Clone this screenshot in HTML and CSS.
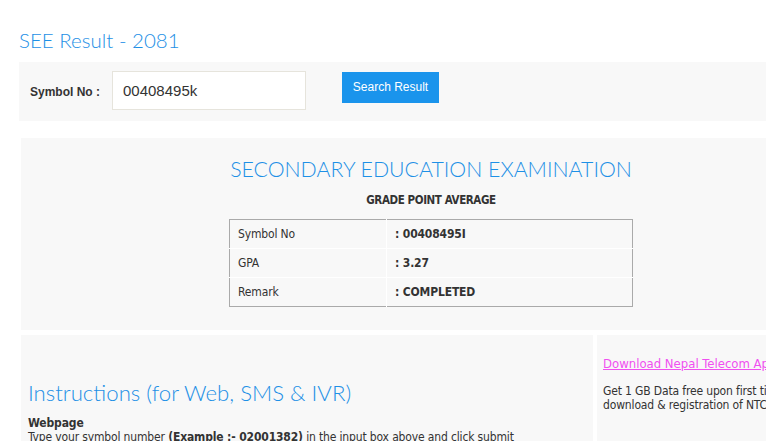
FILE: index.html
```html
<!doctype html>
<html lang="en">
    <head>
        <title>SEE Result - 2081</title>
        <link rel="stylesheet" href="styles.css">
    </head>
    <body>
        <div id="pagina">
            <h1 id="titolo">SEE Result - 2081</h1>
            <div id="ricerca">
                <label for="simbolo" class="etichetta">Symbol No :</label>
                <input type="text" id="simbolo" value="00408495k">
                <input type="button" id="bottone" value="Search Result">
            </div>
            <div id="risultato">
                <h2 class="intestazione">SECONDARY EDUCATION EXAMINATION</h2>
                <div class="sottotitolo">GRADE POINT AVERAGE</div>
                <table class="tabella">
                    <tr><td>Symbol No</td><td class="valore">: 00408495I</td></tr>
                    <tr><td>GPA</td><td class="valore">: 3.27</td></tr>
                    <tr><td>Remark</td><td class="valore">: COMPLETED</td></tr>
                </table>
            </div>
            <div id="sotto">
                <div id="istruzioni">
                    <h2 class="titolo-istruzioni">Instructions (for Web, SMS &amp; IVR)</h2>
                    <div class="grassetto">Webpage</div>
                    <div>Type your symbol number <b>(Example :- 02001382)</b> in the input box above and click submit</div>
                </div>
                <div id="laterale">
                    <a href="#" class="link">Download Nepal Telecom App</a>
                    <p>Get 1 GB Data free upon first time download &amp; registration of NTC app</p>
                </div>
            </div>
        </div>
    </body>
</html>
```

FILE: styles.css
```css
body{
    margin: 0;
    overflow: hidden;
    background: #ffffff;
    font-family: "DejaVu Sans Condensed", "DejaVu Sans", sans-serif;
    font-size: 12px;
    letter-spacing: -0.15px;
    color: #333333;
}
#pagina{
    width: 830px;
    padding: 0 0 0 19px;
}
#titolo{
    margin: 0;
    padding: 28px 0 10px 0;
    font-family: "Lato", sans-serif;
    font-weight: 300;
    font-size: 20.5px;
    letter-spacing: 0;
    color: #1e90e6;
    height: 24px;
}
#ricerca{
    background: #f8f8f8;
    height: 59px;
    display: flex;
    align-items: center;
    padding-left: 11px;
}
.etichetta{
    font-family: "Liberation Sans", Arial, sans-serif;
    font-weight: bold;
    font-size: 12px;
    letter-spacing: 0;
    color: #333333;
    width: 82px;
}
#simbolo{
    box-sizing: border-box;
    width: 194px;
    height: 39px;
    border: solid 1px #e6e4dc;
    background: #ffffff;
    padding: 0 10px;
    font-family: "Liberation Sans", Arial, sans-serif;
    font-size: 15px;
    color: #333333;
    margin-top: -2px;
}
#bottone{
    margin-left: 36px;
    margin-top: -9px;
    width: 97px;
    height: 31px;
    background: #1a94ec;
    border: none;
    color: #ffffff;
    font-family: "Liberation Sans", Arial, sans-serif;
    font-size: 12px;
}
#risultato{
    margin: 17px 0 0 2px;
    background: #f8f8f8;
    height: 192px;
    display: flex;
    flex-direction: column;
    align-items: center;
    width: 820px;
}
.intestazione{
    margin: 18px 0 0 0;
    font-family: "Lato", sans-serif;
    font-weight: 300;
    font-size: 21.3px;
    letter-spacing: 0;
    color: #1e90e6;
}
.sottotitolo{
    margin-top: 11px;
    font-weight: bold;
    font-size: 11.5px;
    letter-spacing: -0.4px;
}
.tabella{
    margin-top: 12px;
    width: 404px;
    border-collapse: collapse;
    border: solid 1px #aaaaaa;
}
.tabella td{
    height: 28px;
    padding: 0 8px;
    border: solid 1px #ffffff;
    width: 140px;
}
.tabella tr:first-child td{
    border-top: none;
}
.tabella tr:last-child td{
    border-bottom: none;
}
.tabella td:first-child{
    border-left: none;
}
.tabella td:last-child{
    border-right: none;
    width: auto;
}
.valore{
    font-weight: bold;
}
#sotto{
    margin: 5px 0 0 2px;
    display: flex;
    gap: 4px;
}
#istruzioni{
    width: 565px;
    height: 140px;
    background: #f8f8f8;
    padding: 44px 0 0 7px;
}
.titolo-istruzioni{
    margin: 0 0 10px 0;
    font-family: "Lato", sans-serif;
    font-weight: 300;
    font-size: 22.2px;
    letter-spacing: 0;
    color: #1e90e6;
}
.grassetto{
    font-weight: bold;
}
#laterale{
    width: 220px;
    height: 160px;
    background: #f8f8f8;
    padding: 21px 0 0 6px;
}
.link{
    color: #f050f0;
    font-size: 13px;
    letter-spacing: 0;
}
#laterale p{
    margin: 13px 0 0 0;
    line-height: 14px;
}
```
